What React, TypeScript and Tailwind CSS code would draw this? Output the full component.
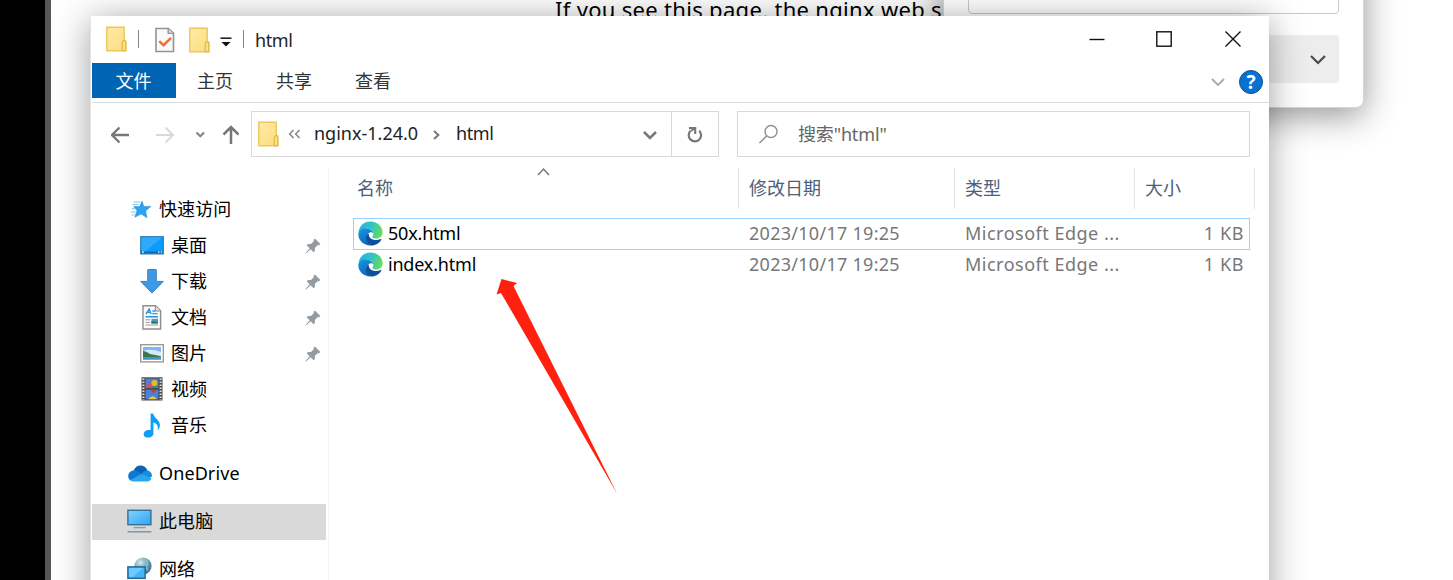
import React from "react";

const Folder = ({ className = "" }: { className?: string }) => (
  <svg className={className} width="21" height="26" viewBox="0 0 21 26">
    <defs>
      <linearGradient id="fold" x1="0" y1="0" x2="1" y2="1">
        <stop offset="0" stopColor="#ffeaa6" />
        <stop offset="1" stopColor="#fddd7e" />
      </linearGradient>
    </defs>
    <path d="M0.8 1.2H18.2V15H19.8V24.8H0.8Z" fill="url(#fold)" stroke="#e9c860" strokeWidth="1.4" />
    <path d="M16.2 24.6V16.4L17.4 14.6H18.6L19.8 16.4V24.6Z" fill="#fbe08a" stroke="#e3bb45" strokeWidth="1.2" />
  </svg>
);

const CheckDoc = () => (
  <svg width="20" height="26" viewBox="0 0 20 26">
    <path d="M1 1.5H13.5L18.5 6V24.5H1Z" fill="#fafafa" stroke="#939393" strokeWidth="1.6" />
    <path d="M13.2 1.5V6.4H18.5" fill="#ddd" stroke="#939393" strokeWidth="1.4" />
    <path d="M4.2 14.2L8.6 18.2L16 10.8" fill="none" stroke="#f2702f" strokeWidth="2.5" />
  </svg>
);

const Chevron = ({ w, h, color, sw }: { w: number; h: number; color: string; sw: number }) => (
  <svg width={w + 4} height={h + 4} viewBox={`-2 -2 ${w + 4} ${h + 4}`}>
    <path d={`M0 0L${w / 2} ${h}L${w} 0`} fill="none" stroke={color} strokeWidth={sw} />
  </svg>
);

const Star = () => (
  <svg width="22" height="19" viewBox="0 0 24 20">
    <path d="M13.2 0.8L15 6.6L22.8 6.6L17.2 11.4L18.4 19L12.2 14.8L5.2 18.4L7.6 11.2L4 6.8H10.4Z" fill="#2aa3f0" stroke="#2b8fd0" strokeWidth="0.6" />
    <path d="M4 1.8H11M3 4.6H9M2 9.2H6M1 12.6H6M1.5 16H5" stroke="#7cc4ee" strokeWidth="1.1" />
  </svg>
);

const Desktop = () => (
  <svg width="24" height="19" viewBox="0 0 24 19">
    <rect x="0.7" y="0.7" width="22.6" height="17.2" fill="#0a9bfd" stroke="#2a7db5" strokeWidth="1.2" />
    <path d="M1.3 1.3H22L6 15H1.3Z" fill="#2fa9fb" />
    <path d="M1 16.4H23" stroke="#1268ab" strokeWidth="1.8" />
    <path d="M2 16.2H4M18 16.2H19.5M20.8 16.2H22.2" stroke="#e7f5ff" strokeWidth="1.3" />
  </svg>
);

const Download = () => (
  <svg width="24" height="25" viewBox="0 0 24 25">
    <path d="M7.7 0.6H16.3V12.4H23.3L12 24L0.7 12.4H7.7Z" fill="#3d98e6" stroke="#3586ca" strokeWidth="1" />
  </svg>
);

const Doc = () => (
  <svg width="20" height="25" viewBox="0 0 20 25">
    <path d="M1 0.8H13.6L18.6 5.8V24H1Z" fill="#fbfbfb" stroke="#8e8e8e" strokeWidth="1.4" />
    <path d="M13.4 1V6H18.4" fill="#e3e3e3" stroke="#8e8e8e" strokeWidth="1.1" />
    <path d="M4 9L7.2 4L9 9M5.2 7.4H9M10.4 6H13M10.4 8.6H15.6M3.6 11.8H16" stroke="#2993d8" strokeWidth="1.4" fill="none" />
    <path d="M3.6 14.8H8M3.6 17.4H8M3.6 20H16" stroke="#999" strokeWidth="1" />
    <rect x="9.4" y="13.8" width="6.6" height="4.6" fill="#4c9ad5" />
    <path d="M9.4 18.4V16L16 17V18.4Z" fill="#36725c" />
  </svg>
);

const Picture = () => (
  <svg width="24" height="19" viewBox="0 0 24 19">
    <rect x="0.7" y="0.7" width="22.6" height="17.2" fill="#fff" stroke="#9b9b9b" strokeWidth="1.4" />
    <rect x="3" y="3" width="18" height="12.6" fill="#7fb8f0" />
    <path d="M3 7Q10 4 21 8V12H3Z" fill="#d4ebf7" />
    <path d="M3 6.8Q7 7.6 10 10L18 11.4L21 12.4V13.6H3Z" fill="#3d7556" />
    <rect x="3" y="13.2" width="18" height="2.4" fill="#4a93b4" />
  </svg>
);

const Video = () => (
  <svg width="22" height="24" viewBox="0 0 22 24">
    <rect x="0.5" y="0.3" width="21" height="23.2" fill="#4b4b4b" />
    <path d="M2.4 1.4V23M19.6 1.4V23" stroke="#dedede" strokeWidth="2" strokeDasharray="1.7 1.3" />
    <rect x="4.6" y="1.6" width="12.8" height="9.4" fill="#4d80dc" />
    <rect x="4.6" y="12.8" width="12.8" height="9.4" fill="#4d80dc" />
    <path d="M4.6 8L10 5L13 10L9 11H4.6Z" fill="#b35b79" />
    <circle cx="13.4" cy="6" r="3" fill="#e0bd23" />
    <path d="M12 9.6H17.4V11H11Z" fill="#4d8b35" />
    <path d="M9.5 12.8H15.5L12.5 16.4Z" fill="#b8432e" />
    <path d="M7 22.2Q12 16.5 16 22.2Z" fill="#ecc42e" />
  </svg>
);

const Music = () => (
  <svg width="18" height="25" viewBox="0 0 18 25">
    <path d="M7.6 0.4H10.2C10.6 5 17 6.6 16.9 12C16.9 14.4 16 15.8 14.6 17.2C15.4 13.8 14.6 10.8 10.4 9.6V20.4C10.4 23 7.8 24.6 5 24.6C2.4 24.6 0.7 23.4 0.7 21.2C0.7 18.4 3.6 16.6 7.6 17.2Z" fill="#0c9ff8" />
  </svg>
);

const Cloud = () => (
  <svg width="24" height="17" viewBox="0 0 24 17">
    <path d="M5.6 5.6C7 2.4 9.4 0.5 12.4 0.5C15.8 0.5 18.6 2.6 19.4 5.8L14 10Z" fill="#0a63b8" />
    <path d="M6 5.4C2.6 5.4 0.2 8 0.2 11C0.2 13 1 14.4 2.4 15.4L14.6 9.4C12 7.2 9 5.4 6 5.4Z" fill="#0f78d2" />
    <path d="M19 5.6C16.8 5.6 15 7 13.6 8.9L19.6 14L24 11.4C24 8 22 5.6 19 5.6Z" fill="#1490df" />
    <path d="M2.2 15.2L13.2 8.9L23.6 13.2C23 15.2 21.4 16.4 19.4 16.4H5.6C4.4 16.4 3.2 16 2.2 15.2Z" fill="#28a8ea" />
  </svg>
);

const Pc = () => (
  <svg width="25" height="24" viewBox="0 0 25 24">
    <defs>
      <linearGradient id="scr" x1="0" y1="0" x2="1" y2="1">
        <stop offset="0" stopColor="#86d3fd" />
        <stop offset="1" stopColor="#28a6f8" />
      </linearGradient>
    </defs>
    <rect x="0.9" y="1.3" width="23" height="14.4" fill="url(#scr)" stroke="#336f98" strokeWidth="1.4" />
    <path d="M6.6 18.6H18.6" stroke="#8e9ca8" strokeWidth="1.4" />
    <path d="M0.6 22.8H24.4" stroke="#7e95aa" strokeWidth="1.5" />
  </svg>
);

const Network = () => (
  <svg width="25" height="25" viewBox="0 0 25 25">
    <defs>
      <radialGradient id="globe" cx="0.35" cy="0.3" r="0.8">
        <stop offset="0" stopColor="#d3e8f0" />
        <stop offset="0.5" stopColor="#72a5bc" />
        <stop offset="1" stopColor="#2c6685" />
      </radialGradient>
    </defs>
    <circle cx="16" cy="9" r="8.6" fill="url(#globe)" />
    <path d="M18 2.5Q22 5 20 8Q18 10 21 13" fill="none" stroke="#a9cbd9" strokeOpacity="0.6" strokeWidth="1.6" />
    <rect x="0.9" y="9.9" width="17.2" height="11.4" fill="#45b4fa" stroke="#246a97" strokeWidth="1.5" />
    <path d="M2 11H16L6 20H2Z" fill="#71caff" />
    <path d="M5 24H15" stroke="#7e95aa" strokeWidth="1.4" />
  </svg>
);

const Pin = () => (
  <svg width="16" height="16" viewBox="0 0 16 16">
    <path d="M9.9 0.6L15.4 6L13.6 7.4L12.8 7L9.9 10.1L9.9 13L8.6 14.2L5.6 11.2L1 15.4L0.5 15L4.7 10.2L1.6 7.2L3.2 5.9H6L8.9 3.1L8.5 2Z" fill="#929ca4" />
  </svg>
);

const Edge = () => (
  <svg width="25" height="25" viewBox="0 0 25 25">
    <defs>
      <linearGradient id="e1" x1="0" y1="0.3" x2="1" y2="0.5">
        <stop offset="0" stopColor="#27b2e3" />
        <stop offset="0.5" stopColor="#2fc3ca" />
        <stop offset="1" stopColor="#66df53" />
      </linearGradient>
      <linearGradient id="e2" x1="0" y1="0" x2="0.4" y2="1">
        <stop offset="0" stopColor="#1598e4" />
        <stop offset="1" stopColor="#0b68bd" />
      </linearGradient>
    </defs>
    <path d="M0.5 11.5C1 5 6 0.4 12.5 0.4C19.5 0.4 24.6 5.4 24.6 11.6C24.6 15.4 21.8 17.6 18.6 17.6C15.6 17.6 14 16.5 14.4 15.5C15.4 14.3 15.5 13 15.2 11.8C14.2 8.8 11 7.4 7.6 7.6C4.5 7.8 1.8 9 0.5 11.5Z" fill="url(#e1)" />
    <path d="M0.4 12.6C1 9 4 7 7.8 7.2C11.6 7.4 14.6 9.4 15.2 12C12.5 9.7 8.8 12.5 8.6 16C8.4 20 11 23.4 14.4 24.4C6.4 25.6 -0.3 19.6 0.4 12.6Z" fill="url(#e2)" />
    <path d="M10.8 12.2C8.8 13.4 7.9 15.4 8 17.4C8.2 21.2 11.2 24.2 14.6 24.4C18.4 24.2 21.8 21.8 23.4 18.6C23.7 18 23.2 17.7 22.7 18C16.8 20.8 9.9 17.8 10.8 12.2Z" fill="#0f4f9c" />
  </svg>
);

type Item = {
  label: string;
  icon: React.ReactNode;
  nested?: boolean;
  pinned?: boolean;
  gap?: boolean;
  selected?: boolean;
};

const items: Item[] = [
  { label: "快速访问", icon: <Star /> },
  { label: "桌面", icon: <Desktop />, nested: true, pinned: true },
  { label: "下载", icon: <Download />, nested: true, pinned: true },
  { label: "文档", icon: <Doc />, nested: true, pinned: true },
  { label: "图片", icon: <Picture />, nested: true, pinned: true },
  { label: "视频", icon: <Video />, nested: true },
  { label: "音乐", icon: <Music />, nested: true },
  { label: "OneDrive", icon: <Cloud />, gap: true },
  { label: "此电脑", icon: <Pc />, gap: true, selected: true },
  { label: "网络", icon: <Network />, gap: true },
];

const Sidebar = () => (
  <nav className="flex w-[238px] shrink-0 flex-col border-r border-[#f3f3f3] pt-[24px]">
    {items.map((it) => (
      <div
        key={it.label}
        className={`ml-px flex h-9 w-[234px] shrink-0 items-center pb-0.5 ${it.nested ? "pl-[47px]" : "pl-[35px]"} ${it.gap ? "mt-3" : ""} ${it.selected ? "bg-[#d9d9d9]" : ""}`}
      >
        <span className={`flex w-[25px] shrink-0 ${it.label === "快速访问" ? "justify-end" : "justify-center"}`}>{it.icon}</span>
        <span className="ml-[7px] -mt-px text-[18px] leading-[34px] tracking-[0.1px] whitespace-nowrap text-black">{it.label}</span>
        {it.pinned && (
          <span className="mr-[5px] ml-auto pt-0.5">
            <Pin />
          </span>
        )}
      </div>
    ))}
  </nav>
);

const FileRow = ({ name, selected }: { name: string; selected?: boolean }) => (
  <div className={`flex w-[897px] items-center border text-[18px] leading-none whitespace-nowrap text-[#777] ${selected ? "h-8 border-[#99d1ff]" : "h-[30px] border-transparent"}`}>
    <div className="flex w-[395px] items-center gap-[5px] pl-1 text-black">
      <span className="-mt-0.5">
        <Edge />
      </span>
      <span className="-mt-[3px] tracking-[-0.2px]">{name}</span>
    </div>
    <span className="-mt-[3px] w-[216px] tracking-[0.28px]">2023/10/17 19:25</span>
    <span className="-mt-[3px] w-[180px] tracking-[0.5px]">Microsoft Edge ...</span>
    <span className="-mt-[3px] flex-1 pr-[5px] text-right tracking-[0.6px]">1 KB</span>
  </div>
);

const Explorer = () => (
  <section className="absolute top-4 left-[90px] flex h-[700px] w-[1179px] flex-col border-l border-[#e4e4e4] bg-white shadow-[0_4px_34px_rgba(0,0,0,0.38)]">
    <header className="flex h-[47px] shrink-0 items-center">
      <Folder className="ml-[15px] -mt-[2px]" />
      <i className="ml-[11px] h-[18px] w-px -mt-[2px] bg-[#858585]" />
      <span className="ml-[16px]"><CheckDoc /></span>
      <Folder className="ml-[14px]" />
      <svg className="ml-[10px] mt-[4px]" width="12" height="10" viewBox="0 0 12 10">
        <path d="M0.5 1.2H11.5" stroke="#222" strokeWidth="1.6" />
        <path d="M1.5 5H10.5L6 9.5Z" fill="#111" />
      </svg>
      <i className="ml-[11px] h-[18px] w-px -mt-[2px] bg-[#858585]" />
      <span className="ml-[11px] text-[18px] leading-none tracking-[-0.4px] text-[#222]">html</span>
      <div className="mr-[28px] ml-auto -mt-[2px] flex items-center">
        <svg width="16" height="16" viewBox="0 0 16 16"><path d="M0.5 8.5H15.5" stroke="#111" strokeWidth="1.4" /></svg>
        <svg className="ml-[51px]" width="16" height="16" viewBox="0 0 16 16"><rect x="0.8" y="0.8" width="14.4" height="14.4" fill="none" stroke="#111" strokeWidth="1.4" /></svg>
        <svg className="ml-[53px]" width="16" height="16" viewBox="0 0 16 16"><path d="M0.5 0.5L15.5 15.5M15.5 0.5L0.5 15.5" stroke="#111" strokeWidth="1.4" /></svg>
      </div>
    </header>
    <div className="ml-px flex h-10 shrink-0 border-b border-[#dadbdc] text-[18px] leading-[36px] text-[#333]">
      <span className="h-[35px] w-[84px] bg-[#0064b5] pr-px text-center text-white">文件</span>
      <span className="ml-[21px]">主页</span>
      <span className="ml-[43px]">共享</span>
      <span className="ml-[43px]">查看</span>
      <div className="mr-1.5 ml-auto flex h-[38px] items-center gap-[13px]">
        <Chevron w={12} h={6} color="#a9a9a9" sw={1.8} />
        <span className="flex size-6 items-center justify-center rounded-full border border-[#12528c] bg-[#0672d2] text-[19px] leading-none font-bold text-white">?</span>
      </div>
    </div>
    <div className="flex h-[62px] shrink-0 items-center">
      <svg className="ml-[20px] mt-[1px]" width="128" height="20" viewBox="0 0 128 20" fill="none">
        <path d="M1 10H18M8.5 2.5L1 10L8.5 17.5" stroke="#777" strokeWidth="2.3" />
        <path d="M45 10H62M54.5 2.5L62 10L54.5 17.5" stroke="#d9d9d9" strokeWidth="2" />
        <path d="M85.5 7.5L89.3 11.3L93.1 7.5" stroke="#888" strokeWidth="2.2" />
        <path d="M120 19V2M112.5 9.5L120 2L127.5 9.5" stroke="#777" strokeWidth="2.5" />
      </svg>
      <div className="ml-[12px] flex h-[46px] w-[468px] items-center border border-[#d9d9d9] text-[18px] text-[#222]">
        <Folder className="ml-[6px]" />
        <svg className="ml-[9px]" width="13" height="10" viewBox="0 0 13 10" fill="none">
          <path d="M5.5 1L1.6 5L5.5 9M11.5 1L7.6 5L11.5 9" stroke="#858585" strokeWidth="1.5" />
        </svg>
        <span className="ml-[13px] -mt-[2px] w-[105px] whitespace-nowrap">nginx-1.24.0</span>
        <svg className="ml-[14px] mt-px" width="7" height="10" viewBox="0 0 7 10" fill="none"><path d="M1 1L5.4 5L1 9" stroke="#777" strokeWidth="2" /></svg>
        <span className="ml-[16px] -mt-[2px] tracking-[-0.4px]">html</span>
        <span className="mt-px mr-[13px] ml-auto"><Chevron w={12} h={6} color="#777" sw={2.5} /></span>
        <div className="flex h-full w-[47px] items-center justify-center border-l border-[#d9d9d9]">
          <svg className="mt-px" width="18" height="18" viewBox="0 0 18 18" fill="none">
            <path d="M4.5 4.8A6.2 6.2 0 1 0 13.2 4.7" stroke="#777" strokeWidth="2.2" />
            <path d="M3 2.1H9.2V8" stroke="#777" strokeWidth="2.1" />
            <path d="M5 5L9 2" stroke="#777" strokeWidth="1.6" />
          </svg>
        </div>
      </div>
      <div className="ml-[18px] flex h-[46px] w-[513px] items-center border border-[#d9d9d9] pl-[20px] text-[18px] text-[#666]">
        <svg className="-mt-px" width="21" height="20" viewBox="0 0 21 20" fill="none">
          <circle cx="13" cy="7.5" r="6" stroke="#908e95" strokeWidth="1.4" />
          <path d="M8.6 12L1.4 19" stroke="#a08f96" strokeWidth="1.6" />
        </svg>
        <span className="ml-[19px] tracking-[-0.15px]">搜索"html"</span>
      </div>
    </div>
    <div className="flex min-h-0 flex-1 pt-[3px]">
      <Sidebar />
      <main className="min-w-0 flex-1 pl-[24px]">
        <div className="relative flex h-[41px] text-[18px] leading-[41px] text-[#4c607a]">
          <span className="w-[386px] border-r border-[#e5e5e5] pl-1">名称</span>
          <span className="w-[216px] border-r border-[#e5e5e5] pl-[10px]">修改日期</span>
          <span className="w-[180px] border-r border-[#e5e5e5] pl-[10px]">类型</span>
          <span className="w-[120px] border-r border-[#e5e5e5] pl-[10px]">大小</span>
          <span className="absolute top-[-1px] left-[183px] rotate-180 leading-none"><Chevron w={11} h={6} color="#777" sw={1.5} /></span>
        </div>
        <div className="mt-[9px]">
          <FileRow name="50x.html" selected />
          <FileRow name="index.html" />
        </div>
      </main>
    </div>
  </section>
);

export default function App() {
  return (
    <div className="relative flex h-[580px] w-[1453px] overflow-hidden bg-white font-['Noto_Sans','Noto_Sans_CJK_SC',sans-serif]">
      <div className="w-[45px] bg-black" />
      <div className="w-[6px] bg-[#56575b]" />
      <p className="absolute top-[-6px] left-[555px] font-['Noto_Sans',sans-serif] text-[22px] leading-[30px] tracking-[0.31px] whitespace-nowrap text-black">
        If you see this page, the nginx web s
      </p>
      <div className="absolute top-[-40px] left-[943px] h-[148px] w-[421px] rounded-[8px] border border-[#d5d5d5] bg-white shadow-[0_8px_34px_rgba(0,0,0,0.42)]">
        <div className="ml-[24px] h-[53px] w-[371px] rounded-[4px] border border-[#c9c9c9] bg-white" />
        <div className="mt-[21px] ml-[24px] flex h-[48px] w-[371px] items-center justify-end rounded-[3px] bg-[#ededed] pr-[12px]">
          <Chevron w={14} h={7} color="#4a4a4a" sw={2.2} />
        </div>
      </div>
      <Explorer />
      <svg className="absolute top-[278px] left-[495px]" width="124" height="217" viewBox="0 0 124 217">
        <path d="M6.5 1L22 5L18.5 8L122 215.5L6 15L1.5 16.5Z" fill="#ff2010" />
      </svg>
    </div>
  );
}
